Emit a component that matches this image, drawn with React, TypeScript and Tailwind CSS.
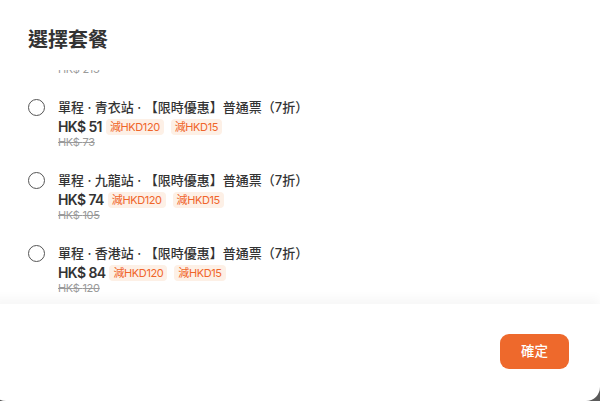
const FONT = "font-['Inter','Noto_Sans_CJK_TC',sans-serif]";

// ─── Data ─────────────────────────────────────────────────────────────────────
interface Plan {
  id: number;
  title: string;
  price: number;
  original: number;
}

const PLANS: Plan[] = [
  { id: 0, title: "單程 · 機場站 · 【限時優惠】普通票（7折）", price: 149, original: 213 },
  { id: 1, title: "單程 · 青衣站 · 【限時優惠】普通票（7折）", price: 51, original: 73 },
  { id: 2, title: "單程 · 九龍站 · 【限時優惠】普通票（7折）", price: 74, original: 105 },
  { id: 3, title: "單程 · 香港站 · 【限時優惠】普通票（7折）", price: 84, original: 120 },
];

const TAGS = ["減HKD120", "減HKD15"];

// ─── Row ──────────────────────────────────────────────────────────────────────
function PlanRow({ plan }: { plan: Plan }) {
  return (
    <div className="flex h-[73px] items-start">
      <div className="mt-[1.5px] h-[17px] w-[17px] shrink-0 rounded-full border-[1.5px] border-[#555]" />
      <div className="ml-[13px] flex flex-col">
        <p className="h-[20px] text-[13px] leading-[20px] font-medium text-[#333]">{plan.title}</p>
        <div className="flex h-[20px] items-center">
          <span className="mr-[4px] text-[14px] leading-[20px] font-semibold tracking-[-0.6px] text-[#333]">
            HK$ {plan.price}
          </span>
          <div className="flex gap-[7px]">
            {TAGS.map((t) => (
              <span
                key={t}
                className="flex h-[16px] items-center rounded-[4px] bg-[#fdf0e6] px-[4px] text-[11px] tracking-[-0.4px] text-[#f0652a]"
              >
                {t}
              </span>
            ))}
          </div>
        </div>
        <p className="h-[11px] text-[11px] leading-[11px] tracking-[-0.3px] text-[#9a9a9a] line-through">
          HK$ {plan.original}
        </p>
      </div>
    </div>
  );
}

// ─── Main ─────────────────────────────────────────────────────────────────────
export default function App() {
  return (
    <div className={`h-[401px] w-[600px] overflow-hidden bg-[#5a5a5a] ${FONT}`}>
      <div className="-ml-[8px] flex h-[401px] w-[608px] flex-col rounded-b-[14px] bg-white">
        <div className="h-[70px] shrink-0 pt-[26px] pl-[36px]">
          <h1 className="text-[20px] leading-[28px] font-bold text-[#333]">選擇套餐</h1>
        </div>

        <div className="h-[234px] shrink-0 overflow-hidden pl-[36px]">
          <div className="-mt-[46px]">
            {PLANS.map((p) => (
              <PlanRow key={p.id} plan={p} />
            ))}
          </div>
        </div>

        <div className="relative flex flex-1 items-start justify-end pt-[30px] pr-[31px] shadow-[0_-6px_10px_rgba(0,0,0,0.035)]">
          <button className="h-[35px] w-[69px] rounded-[9px] bg-[#ee692c] text-[13.5px] font-medium text-white">
            確定
          </button>
        </div>
      </div>
    </div>
  );
}
